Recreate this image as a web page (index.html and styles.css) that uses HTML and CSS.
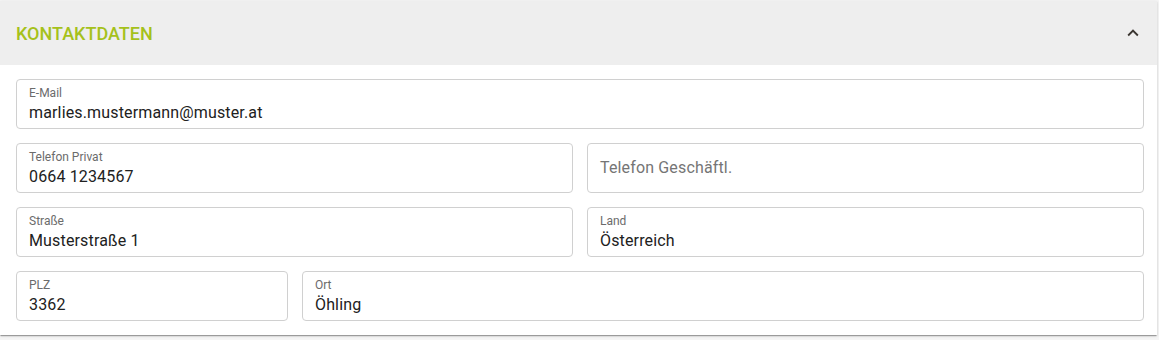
FILE: index.html
```html
<!DOCTYPE html>
<html lang="de">
<head>
<meta charset="utf-8">
<title>Kontaktdaten</title>
<link rel="stylesheet" href="styles.css">
</head>
<body>
<div class="page">
  <section class="card">
    <header class="card-header">
      <h2 class="card-title">Kontaktdaten</h2>
      <svg class="chevron" viewBox="0 0 24 24" width="22" height="22" aria-hidden="true">
        <path d="M12 8l-6 6 1.41 1.41L12 10.83l4.59 4.58L18 14z"/>
      </svg>
    </header>
    <div class="card-body">
      <div class="row row-1">
        <div class="field"><span class="label">E-Mail</span><span class="value">marlies.mustermann@muster.at</span></div>
      </div>
      <div class="row row-2">
        <div class="field"><span class="label">Telefon Privat</span><span class="value">0664 1234567</span></div>
        <div class="field empty"><span class="placeholder">Telefon Geschäftl.</span></div>
      </div>
      <div class="row row-2">
        <div class="field"><span class="label">Straße</span><span class="value">Musterstraße 1</span></div>
        <div class="field"><span class="label">Land</span><span class="value">Österreich</span></div>
      </div>
      <div class="row row-plz">
        <div class="field"><span class="label">PLZ</span><span class="value">3362</span></div>
        <div class="field"><span class="label">Ort</span><span class="value">Öhling</span></div>
      </div>
    </div>
  </section>
</div>
</body>
</html>
```

FILE: styles.css
```css
* { box-sizing: border-box; }
html, body { margin: 0; padding: 0; background: #ffffff; }
body {
  font-family: Roboto, "Liberation Sans", Arial, sans-serif;
  color: #212121;
}
.page {
  padding-top: 1px;
  width: 1159px;
  height: 340px;
  background: #f5f5f5;
}
.card {
  width: 1157px;
  background: #ffffff;
  box-shadow: 0 2px 1px -1px rgba(0,0,0,.2), 0 1px 1px 0 rgba(0,0,0,.14), 0 1px 3px 0 rgba(0,0,0,.12);
}
.card-header {
  height: 64px;
  background: #eeeeee;
  display: flex;
  align-items: center;
  justify-content: space-between;
  padding: 0 16px 0 16px;
}
.card-title {
  margin: 0;
  font-size: 18px;
  font-weight: 500;
  text-transform: uppercase;
  color: #a5c11b;
  letter-spacing: 0;
}
.chevron {
  fill: #3a3530;
  margin-right: -3px;
}
.card-body {
  padding: 14px 13px 14px 16px;
  display: flex;
  flex-direction: column;
  gap: 14px;
}
.row {
  display: grid;
  column-gap: 14px;
}
.row-1 { grid-template-columns: 1fr; }
.row-2 { grid-template-columns: 1fr 1fr; }
.row-plz { grid-template-columns: 272px 1fr; }
.field {
  height: 50px;
  border: 1px solid #d0d0d0;
  border-radius: 4px;
  padding: 6px 12px 5px;
  display: flex;
  flex-direction: column;
}
.field.empty { justify-content: center; padding-top: 0; padding-bottom: 0; }
.label {
  font-size: 12px;
  line-height: 14px;
  color: #6b6b6b;
}
.value {
  margin-top: 3px;
  font-size: 16px;
  line-height: 20px;
  letter-spacing: 0.15px;
  color: #212121;
}
.placeholder {
  font-size: 16px;
  line-height: 20px;
  letter-spacing: 0.15px;
  color: #757575;
}
```
